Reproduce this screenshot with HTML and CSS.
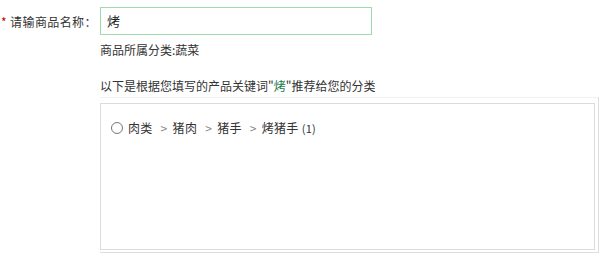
FILE: index.html
```html
<!DOCTYPE html>
<html lang="zh-CN">
<head>
<meta charset="utf-8">
<link rel="stylesheet" href="styles.css">
</head>
<body>
<div class="form">
  <div class="row">
    <label class="label"><span class="star">*</span> 请输商品名称：</label>
    <div class="input">烤</div>
  </div>
  <div class="body">
    <div class="cat">商品所属分类:蔬菜</div>
    <div class="tip">以下是根据您填写的产品关键词"<span class="kw">烤</span>"推荐给您的分类</div>
    <div class="outer">
      <div class="box">
        <div class="opt">
          <span class="radio"></span>
          <span class="path">肉类<i>&gt;</i>猪肉<i>&gt;</i>猪手<i>&gt;</i>烤猪手 <span class="cnt">(1)</span></span>
        </div>
      </div>
    </div>
  </div>
</div>
</body>
</html>
```
FILE: styles.css
```css
html, body { margin: 0; padding: 0; background: #fff; }
body {
  font-family: "Noto Sans CJK SC", "DejaVu Sans", sans-serif;
  font-size: 12px;
  color: #333;
}
.form { padding-top: 7px; }
.row { display: flex; align-items: center; }
.label {
  width: 100px;
  box-sizing: border-box;
  padding-left: 1px;
  font-size: 12px;
  letter-spacing: 0.4px;
  color: #333;
}
.star { color: #c00; }
.input {
  width: 272px;
  height: 28px;
  box-sizing: border-box;
  border: 1px solid #9edcae;
  padding-left: 6px;
  line-height: 26px;
  font-size: 13px;
  color: #222;
}
.body { padding-left: 100px; }
.cat { margin-top: 6px; line-height: 18px; }
.tip { margin-top: 18px; line-height: 18px; }
.kw { color: #1e7a4c; }
.outer {
  margin-top: 2px;
  width: 499px;
  height: 156px;
  box-sizing: border-box;
  border-top: 1px solid #f2f2f2;
  border-right: 1px solid #dedede;
  border-bottom: 1px solid #dedede;
  padding-top: 5px;
  padding-right: 3px;
  padding-bottom: 2px;
}
.box {
  height: 100%;
  box-sizing: border-box;
  border: 1px solid #dcdcdc;
  padding: 16px 0 0 10px;
}
.opt { display: flex; align-items: center; }
.radio {
  width: 10px;
  height: 10px;
  border: 1.5px solid #777;
  border-radius: 50%;
  margin-right: 5px;
}
.path { line-height: 16px; letter-spacing: 0.3px; }
.path i { font-style: normal; color: #888; margin: 0 5px 0 8px; }
.cnt { font-size: 11px; }
```
